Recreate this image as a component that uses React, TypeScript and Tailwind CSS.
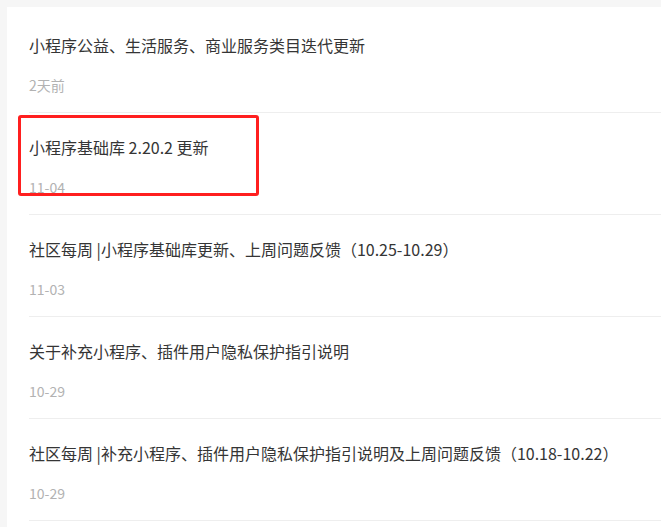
import React from "react";

type Post = {
  title: string;
  date: string;
};

const posts: Post[] = [
  { title: "小程序公益、生活服务、商业服务类目迭代更新", date: "2天前" },
  { title: "小程序基础库 2.20.2 更新", date: "11-04" },
  { title: "社区每周 |小程序基础库更新、上周问题反馈（10.25-10.29）", date: "11-03" },
  { title: "关于补充小程序、插件用户隐私保护指引说明", date: "10-29" },
  {
    title: "社区每周 |补充小程序、插件用户隐私保护指引说明及上周问题反馈（10.18-10.22）",
    date: "10-29",
  },
];

const PostItem = ({ post }: { post: Post }) => {
  return (
    <li className="ml-[22px] border-b border-[#eeeeee] pt-[22px] pb-[17px]">
      <div className="text-[16px] leading-[24px] text-[#353535] whitespace-nowrap">
        {post.title}
      </div>
      <div className="mt-[18px] text-[14px] leading-[20px] text-[#b2b2b2]">
        {post.date}
      </div>
    </li>
  );
};

export default function App() {
  return (
    <div
      className="w-[661px] h-[527px] overflow-hidden bg-[#f6f6f6] pt-[7px] pl-[7px]"
      style={{ fontFamily: '"Noto Sans CJK SC", "Noto Sans", sans-serif' }}
    >
      <div className="relative h-full bg-white pt-[4px]">
        <ul>
          {posts.map((post, index) => (
            <PostItem key={index} post={post} />
          ))}
        </ul>
        {/* red highlight box around the second post */}
        <div className="absolute left-[11px] top-[108px] w-[241px] h-[81px] rounded-[3px] border-[3px] border-[#ff1f1f]" />
      </div>
    </div>
  );
}
